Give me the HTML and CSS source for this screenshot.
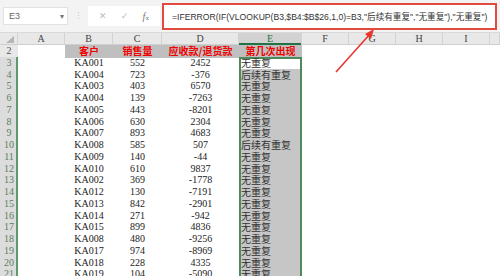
FILE: index.html
```html
<!DOCTYPE html>
<html lang="zh-CN">
<head>
<meta charset="UTF-8">
<title>查找重复 | Excel</title>
<link rel="stylesheet" href="styles.css">
</head>
<body>
<div class="app">
  <div class="toolbar">
    <div class="namebox"><span>E3</span><span class="caret">▾</span></div>
    <div class="grip">⋮</div>
    <div class="fx-buttons">
      <span class="btn">✕</span>
      <span class="btn">✓</span>
      <span class="btn fx"><i>f</i><small>x</small></span>
    </div>
    <div class="formula">=IFERROR(IF(VLOOKUP(B3,$B4:$B$26,1,0)=B3,"后续有重复","无重复"),"无重复")</div>
  </div>

  <div class="sheet">
    <div class="row colhead">
      <div class="corner"><span></span></div>
      <div>A</div><div>B</div><div>C</div><div>D</div><div class="on">E</div>
      <div>F</div><div>G</div><div>H</div><div>I</div><div></div>
    </div>
    <div class="row">
      <div class="rh">2</div><div></div>
      <div class="th">客户</div><div class="th">销售量</div><div class="th">应收款/退货款</div><div class="th">第几次出现</div>
      <div></div><div></div><div></div><div></div><div></div>
    </div>
    <div class="row"><div class="rh on">3</div><div></div><div>KA001</div><div>552</div><div>2452</div><div class="e sel first">无重复</div><div></div><div></div><div></div><div></div><div></div></div>
    <div class="row"><div class="rh on">4</div><div></div><div>KA004</div><div>723</div><div>-376</div><div class="e sel">后续有重复</div><div></div><div></div><div></div><div></div><div></div></div>
    <div class="row"><div class="rh on">5</div><div></div><div>KA003</div><div>403</div><div>6570</div><div class="e sel">无重复</div><div></div><div></div><div></div><div></div><div></div></div>
    <div class="row"><div class="rh on">6</div><div></div><div>KA004</div><div>139</div><div>-7263</div><div class="e sel">无重复</div><div></div><div></div><div></div><div></div><div></div></div>
    <div class="row"><div class="rh on">7</div><div></div><div>KA005</div><div>443</div><div>-8201</div><div class="e sel">无重复</div><div></div><div></div><div></div><div></div><div></div></div>
    <div class="row"><div class="rh on">8</div><div></div><div>KA006</div><div>630</div><div>2304</div><div class="e sel">无重复</div><div></div><div></div><div></div><div></div><div></div></div>
    <div class="row"><div class="rh on">9</div><div></div><div>KA007</div><div>893</div><div>4683</div><div class="e sel">无重复</div><div></div><div></div><div></div><div></div><div></div></div>
    <div class="row"><div class="rh on">10</div><div></div><div>KA008</div><div>585</div><div>507</div><div class="e sel">后续有重复</div><div></div><div></div><div></div><div></div><div></div></div>
    <div class="row"><div class="rh on">11</div><div></div><div>KA009</div><div>140</div><div>-44</div><div class="e sel">无重复</div><div></div><div></div><div></div><div></div><div></div></div>
    <div class="row"><div class="rh on">12</div><div></div><div>KA010</div><div>610</div><div>9837</div><div class="e sel">无重复</div><div></div><div></div><div></div><div></div><div></div></div>
    <div class="row"><div class="rh on">13</div><div></div><div>KA002</div><div>369</div><div>-1778</div><div class="e sel">无重复</div><div></div><div></div><div></div><div></div><div></div></div>
    <div class="row"><div class="rh on">14</div><div></div><div>KA012</div><div>130</div><div>-7191</div><div class="e sel">无重复</div><div></div><div></div><div></div><div></div><div></div></div>
    <div class="row"><div class="rh on">15</div><div></div><div>KA013</div><div>842</div><div>-2901</div><div class="e sel">无重复</div><div></div><div></div><div></div><div></div><div></div></div>
    <div class="row"><div class="rh on">16</div><div></div><div>KA014</div><div>271</div><div>-942</div><div class="e sel">无重复</div><div></div><div></div><div></div><div></div><div></div></div>
    <div class="row"><div class="rh on">17</div><div></div><div>KA015</div><div>899</div><div>4836</div><div class="e sel">无重复</div><div></div><div></div><div></div><div></div><div></div></div>
    <div class="row"><div class="rh on">18</div><div></div><div>KA008</div><div>480</div><div>-9256</div><div class="e sel">无重复</div><div></div><div></div><div></div><div></div><div></div></div>
    <div class="row"><div class="rh on">19</div><div></div><div>KA017</div><div>974</div><div>-8969</div><div class="e sel">无重复</div><div></div><div></div><div></div><div></div><div></div></div>
    <div class="row"><div class="rh on">20</div><div></div><div>KA018</div><div>228</div><div>4335</div><div class="e sel">无重复</div><div></div><div></div><div></div><div></div><div></div></div>
    <div class="row"><div class="rh on">21</div><div></div><div>KA019</div><div>104</div><div>-5090</div><div class="e sel">无重复</div><div></div><div></div><div></div><div></div><div></div></div>
  </div>

  <!-- 指向公式栏的箭头 -->
  <svg class="arrow" viewBox="0 0 50 50" width="50" height="50">
    <line x1="4" y1="46" x2="38" y2="8" stroke="#e8362f" stroke-width="1.6"/>
    <path d="M42,3 L33,8 L39,13 Z" fill="#e8362f"/>
  </svg>
</div>
</body>
</html>
```

FILE: styles.css
```css
* {
    margin: 0;
    padding: 0;
    box-sizing: border-box;
}

body {
    width: 500px;
    height: 276px;
    overflow: hidden;
    background: #fff;
    font-family: "Liberation Serif", "Noto Sans CJK SC", serif;
    color: #222;
}

.app {
    position: relative;
    height: 276px;
}

/* 公式栏 */
.toolbar {
    height: 33px;
    background: #f3f3f3;
    display: flex;
    align-items: center;
    padding: 0 3px;
    border-bottom: 1px solid #d9d9d9;
}

.namebox {
    width: 65px;
    height: 18px;
    background: #fff;
    border: 1px solid #e2e2e2;
    display: flex;
    align-items: center;
    justify-content: space-between;
    padding: 0 3px 0 5px;
    font: 9px "Liberation Sans", sans-serif;
    color: #666;
}

.caret {
    font-size: 8px;
    color: #777;
}

.grip {
    width: 20px;
    text-align: center;
    font: 9px "Liberation Sans", sans-serif;
    color: #c4c4c4;
}

.fx-buttons {
    width: 72px;
    height: 20px;
    background: #fff;
    display: flex;
    align-items: center;
    justify-content: space-around;
    padding: 0 4px;
    font: 9px "DejaVu Sans", sans-serif;
    color: #bbb;
}

.fx {
    font-family: "Liberation Serif", serif;
    color: #777;
    font-size: 10px;
}

.fx small {
    font-size: 7px;
}

.formula {
    margin-left: 2px;
    width: 335px;
    height: 27px;
    border: 2px solid #e24a3f;
    background: #fff;
    display: flex;
    align-items: center;
    padding-left: 8px;
    font: 8.6px "Liberation Sans", "Noto Sans CJK SC", sans-serif;
    color: #333;
    white-space: nowrap;
    overflow: hidden;
}

/* 表格 */
.row {
    display: grid;
    grid-template-columns: 18px 47px 48px 49px 77px 63px 47px 47px 47px 47px 10px;
    height: 11.75px;
    font-size: 10px;
    line-height: 11.75px;
    text-align: center;
    white-space: nowrap;
}

.colhead {
    height: 12px;
    line-height: 12px;
    background: #e8e8e8;
    color: #444;
    border-bottom: 1px solid #cfcfcf;
}

.colhead div {
    border-right: 1px solid #d3d3d3;
}

.colhead .on {
    background: #d2d2d2;
    color: #217346;
    box-shadow: inset 0 -2px #217346;
}

.corner span {
    display: block;
    width: 0;
    height: 0;
    margin: 3px 0 0 6px;
    border-left: 8px solid transparent;
    border-bottom: 7px solid #b5b5b5;
}

.rh {
    background: #e8e8e8;
    color: #555;
    border-bottom: 1px solid #d6d6d6;
}

.rh.on {
    background: #dcdcdc;
    color: #5a7f63;
    box-shadow: inset -2px 0 #5f9a6d;
}

.th {
    background: #bfbfbf;
    color: #f00000;
    font-weight: bold;
    font-family: "Noto Sans CJK SC", sans-serif;
    font-size: 10px;
}

.e {
    text-align: left;
    padding-left: 2px;
    font-family: "Noto Sans CJK SC", sans-serif;
    color: #333;
}

.sel {
    background: #c6c6c6;
    box-shadow: inset 2px 0 #4f8a5c, inset -2px 0 #4f8a5c;
}

.sel.first {
    background: #fff;
    box-shadow: inset 2px 0 #4f8a5c, inset -2px 0 #4f8a5c, inset 0 2px #4f8a5c;
}

.arrow {
    position: absolute;
    left: 332px;
    top: 26px;
}
```
